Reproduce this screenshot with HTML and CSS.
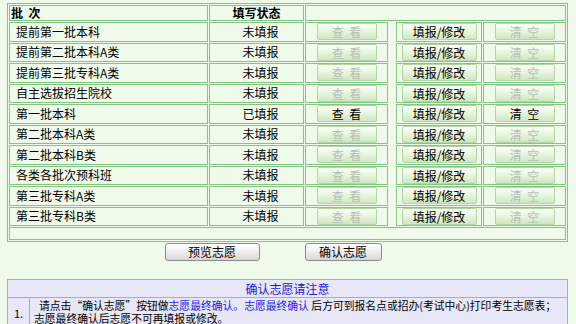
FILE: index.html
```html
<!DOCTYPE html>
<html lang="zh-CN">
<head>
    <meta charset="UTF-8">
    <title>志愿填报</title>
    <link rel="stylesheet" href="styles.css">
</head>
<body>
<div class="page">
    <table class="batch">
        <colgroup>
            <col class="c-name"><col class="c-state"><col class="c-view"><col class="c-gap"><col class="c-edit"><col class="c-clear">
        </colgroup>
        <tr class="head">
            <th class="name">批&nbsp;&nbsp;次</th>
            <th>填写状态</th>
            <th colspan="4"></th>
        </tr>
        <tr>
            <td class="name">提前第一批本科</td><td class="state">未填报</td>
            <td><button class="op" disabled>查&nbsp;&nbsp;看</button></td><td class="gap"></td>
            <td><button class="op wide">填报/修改</button></td>
            <td><button class="op" disabled>清&nbsp;&nbsp;空</button></td>
        </tr>
        <tr>
            <td class="name">提前第二批本科A类</td><td class="state">未填报</td>
            <td><button class="op" disabled>查&nbsp;&nbsp;看</button></td><td class="gap"></td>
            <td><button class="op wide">填报/修改</button></td>
            <td><button class="op" disabled>清&nbsp;&nbsp;空</button></td>
        </tr>
        <tr>
            <td class="name">提前第三批专科A类</td><td class="state">未填报</td>
            <td><button class="op" disabled>查&nbsp;&nbsp;看</button></td><td class="gap"></td>
            <td><button class="op wide">填报/修改</button></td>
            <td><button class="op" disabled>清&nbsp;&nbsp;空</button></td>
        </tr>
        <tr>
            <td class="name">自主选拔招生院校</td><td class="state">未填报</td>
            <td><button class="op" disabled>查&nbsp;&nbsp;看</button></td><td class="gap"></td>
            <td><button class="op wide">填报/修改</button></td>
            <td><button class="op" disabled>清&nbsp;&nbsp;空</button></td>
        </tr>
        <tr>
            <td class="name">第一批本科</td><td class="state">已填报</td>
            <td><button class="op">查&nbsp;&nbsp;看</button></td><td class="gap"></td>
            <td><button class="op wide">填报/修改</button></td>
            <td><button class="op">清&nbsp;&nbsp;空</button></td>
        </tr>
        <tr>
            <td class="name">第二批本科A类</td><td class="state">未填报</td>
            <td><button class="op" disabled>查&nbsp;&nbsp;看</button></td><td class="gap"></td>
            <td><button class="op wide">填报/修改</button></td>
            <td><button class="op" disabled>清&nbsp;&nbsp;空</button></td>
        </tr>
        <tr>
            <td class="name">第二批本科B类</td><td class="state">未填报</td>
            <td><button class="op" disabled>查&nbsp;&nbsp;看</button></td><td class="gap"></td>
            <td><button class="op wide">填报/修改</button></td>
            <td><button class="op" disabled>清&nbsp;&nbsp;空</button></td>
        </tr>
        <tr>
            <td class="name">各类各批次预科班</td><td class="state">未填报</td>
            <td><button class="op" disabled>查&nbsp;&nbsp;看</button></td><td class="gap"></td>
            <td><button class="op wide">填报/修改</button></td>
            <td><button class="op" disabled>清&nbsp;&nbsp;空</button></td>
        </tr>
        <tr>
            <td class="name">第三批专科A类</td><td class="state">未填报</td>
            <td><button class="op" disabled>查&nbsp;&nbsp;看</button></td><td class="gap"></td>
            <td><button class="op wide">填报/修改</button></td>
            <td><button class="op" disabled>清&nbsp;&nbsp;空</button></td>
        </tr>
        <tr>
            <td class="name">第三批专科B类</td><td class="state">未填报</td>
            <td><button class="op" disabled>查&nbsp;&nbsp;看</button></td><td class="gap"></td>
            <td><button class="op wide">填报/修改</button></td>
            <td><button class="op" disabled>清&nbsp;&nbsp;空</button></td>
        </tr>
        <tr class="foot"><td colspan="6"></td></tr>
    </table>

    <div class="actions">
        <button class="main preview">预览志愿</button>
        <button class="main confirm">确认志愿</button>
    </div>

    <table class="notice">
        <tr><th colspan="2">确认志愿请注意</th></tr>
        <tr>
            <td class="num">1.</td>
            <td class="text"><span class="lead">请点击“确认志愿”按钮做<span class="hl">志愿最终确认。志愿最终确认</span>&nbsp;后方可到报名点或招办(考试中心)打印考生志愿表；</span><br>志愿最终确认后志愿不可再填报或修改。</td>
        </tr>
    </table>
</div>
</body>
</html>
```

FILE: styles.css
```css
body { margin: 0; background: #effaeb; font-family: "Noto Sans CJK SC", sans-serif; font-size: 12px; color: #000; }
.page { width: 561px; padding: 3px 0 0 7px; }

.batch { width: 561px; table-layout: fixed; border-collapse: separate; border-spacing: 1px; border: 1px solid #82c77f; }
.batch th, .batch td { box-sizing: border-box; border: 1px solid #82c77f; padding: 0; height: 19.5px; text-align: center; font-weight: normal; line-height: 14px; }
.c-name { width: 199px; }
.c-state { width: 95px; }
.c-view { width: 83px; }
.c-gap { width: 6px; }
.c-edit { width: 86px; }
.c-clear { width: 83px; }

.batch .head th { height: 16px; font-weight: bold; }
.batch .head th.name { text-align: left; padding-left: 1px; }
.batch td.name { text-align: left; padding-left: 6px; }
.batch td.state { padding-left: 8px; }
.batch td.gap { border: none; }
.batch .foot td { height: 13px; }

.op {
    display: block;
    margin: 0 auto;
    width: 60px;
    height: 17px;
    padding: 0;
    border: 1px solid #b3d6a6;
    border-radius: 2px;
    background: linear-gradient(#fbfff8, #e6f5dd 50%, #cfe7c2);
    font-family: inherit;
    font-size: 12px;
    line-height: 15px;
    color: #000;
    white-space: nowrap;
}
.op.wide { width: 75px; }
.op:disabled { color: #b9bdb6; }

.actions { display: flex; justify-content: center; gap: 45px; padding-right: 29px; margin-top: 1px; }
.main {
    height: 18px;
    padding: 0;
    border: 1px solid #8c8c8c;
    border-radius: 3px;
    background: linear-gradient(#ffffff, #ececec 55%, #d6d6d6);
    font-family: inherit;
    font-size: 12px;
    line-height: 16px;
    color: #000;
}
.main.preview { width: 95px; }
.main.confirm { width: 77px; }

.notice { width: 561px; margin-top: 18px; border-collapse: collapse; background: #e7e7f7; }
.notice th, .notice td { border: 1px solid #a9a9cf; padding: 0; }
.notice th { height: 17px; font-weight: normal; color: #1a1ad0; line-height: 15px; }
.notice td.num { width: 21px; text-align: center; font-size: 11px; }
.notice td.text { padding: 1px 2px 2px 4px; font-size: 10.8px; line-height: 13px; white-space: nowrap; }
.notice .lead { padding-left: 5px; }
.hl { color: #1f1fe6; }
```
